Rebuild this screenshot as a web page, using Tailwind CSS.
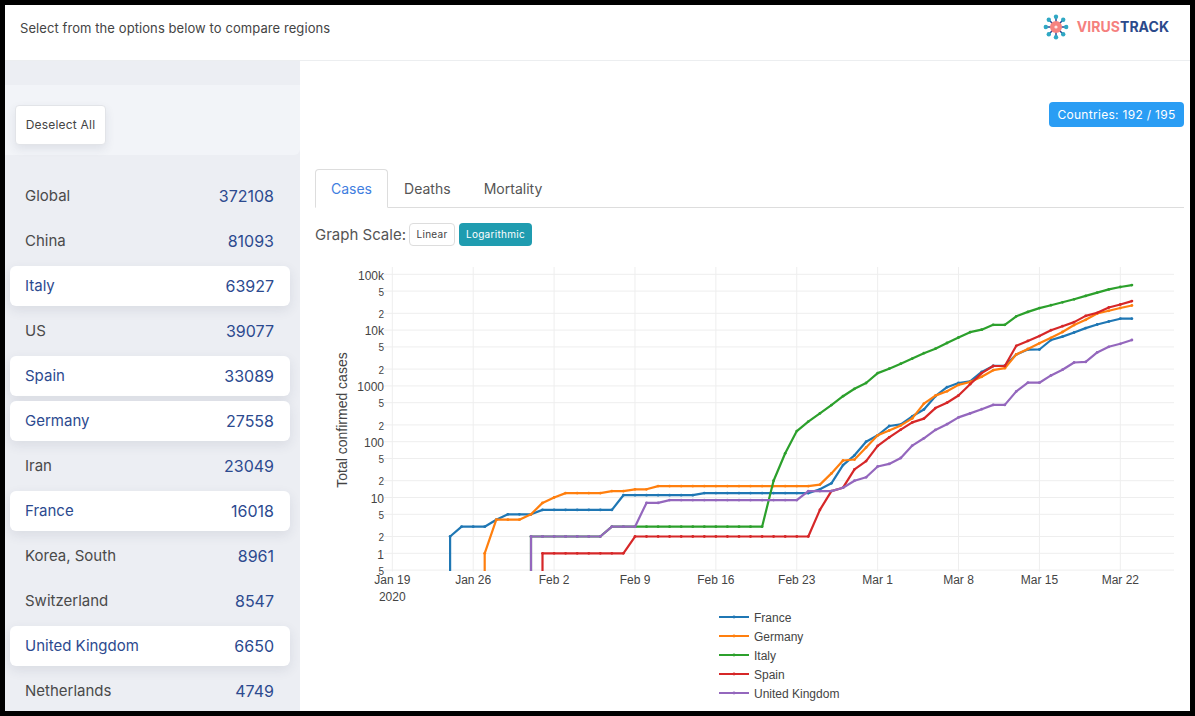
<!DOCTYPE html>
<html lang="en">
<head>
    <meta charset="UTF-8">
    <meta name="viewport" content="width=device-width, initial-scale=1.0">
    <title>VirusTrack</title>
    <script src="https://cdn.jsdelivr.net/npm/@tailwindcss/browser@4"></script>
</head>
<body class="bg-black">
    <div class="w-[1195px] h-[716px] bg-black p-[5px] font-['Inter',sans-serif] overflow-hidden">
        <div class="w-[1185px] h-[706px] bg-white overflow-hidden flex flex-col">
            <!-- header -->
            <header class="h-[56px] shrink-0 border-b border-[#eceef0] flex items-center justify-between pl-[15px] pr-[21px]">
                <p class="text-[13px] tracking-[0.08px] text-[#444] -mt-[8px]">Select from the options below to compare regions</p>
                <div class="flex items-center gap-[8px] -mt-[11px]">
                    <svg width="26" height="26" viewBox="-13 -13 26 26">
                        <g stroke="#1f3f8f" stroke-width="1.4">
                            <line x1="0" y1="-10" x2="0" y2="10"/>
                            <line x1="-10" y1="0" x2="10" y2="0"/>
                            <line x1="-7" y1="-7" x2="7" y2="7"/>
                            <line x1="7" y1="-7" x2="-7" y2="7"/>
                        </g>
                        <circle r="6" fill="#f5837f"/>
                        <circle r="1.6" cx="0" fill="#fde8e6"/>
                        <g fill="#2fa8c4">
                            <circle cx="0" cy="-10.2" r="2.2"/>
                            <circle cx="0" cy="10.2" r="2.2"/>
                            <circle cx="-10.2" cy="0" r="2.2"/>
                            <circle cx="10.2" cy="0" r="2.2"/>
                            <circle cx="-7.2" cy="-7.2" r="2.2"/>
                            <circle cx="7.2" cy="-7.2" r="2.2"/>
                            <circle cx="-7.2" cy="7.2" r="2.2"/>
                            <circle cx="7.2" cy="7.2" r="2.2"/>
                        </g>
                    </svg>
                    <span class="text-[14px] leading-[20px] font-bold tracking-[0.03px]"><span class="text-[#f5807e]">VIRUS</span><span class="text-[#2b4a8b]">TRACK</span></span>
                </div>
            </header>

            <div class="flex flex-1 min-h-0">
                <!-- sidebar -->
                <aside class="w-[295px] shrink-0 bg-[#eceef3] pt-[24px] overflow-hidden">
                    <div class="h-[70px] bg-[#f2f4f8] rounded-br-md pl-[10px] pt-[20px]">
                        <button class="w-[91px] h-[40px] bg-white border border-[#e2e4e8] rounded-[4px] shadow-[0_4px_10px_rgba(50,60,90,0.1)] text-[12px] tracking-[0.2px] text-[#444]">Deselect All</button>
                    </div>
                    <ul class="pt-[21px] pl-[5px] pr-[10px] flex flex-col gap-[5px] text-[15px]">
                        <li class="h-[40px] pl-[15px] pr-[16px] flex items-center justify-between text-[#4a4a4a]"><span>Global</span><span class="text-[16px] leading-[22px] -mt-[1px] text-[#2c4a8f]">372108</span></li>
                        <li class="h-[40px] pl-[15px] pr-[16px] flex items-center justify-between text-[#4a4a4a]"><span>China</span><span class="text-[16px] leading-[22px] -mt-[1px] text-[#2c4a8f]">81093</span></li>
                        <li class="h-[40px] pl-[15px] pr-[16px] flex items-center justify-between bg-white rounded-md shadow-[0_4px_12px_rgba(50,60,90,0.1)] text-[#2c4a8f]"><span>Italy</span><span class="text-[16px] leading-[22px] -mt-[1px]">63927</span></li>
                        <li class="h-[40px] pl-[15px] pr-[16px] flex items-center justify-between text-[#4a4a4a]"><span>US</span><span class="text-[16px] leading-[22px] -mt-[1px] text-[#2c4a8f]">39077</span></li>
                        <li class="h-[40px] pl-[15px] pr-[16px] flex items-center justify-between bg-white rounded-md shadow-[0_4px_12px_rgba(50,60,90,0.1)] text-[#2c4a8f]"><span>Spain</span><span class="text-[16px] leading-[22px] -mt-[1px]">33089</span></li>
                        <li class="h-[40px] pl-[15px] pr-[16px] flex items-center justify-between bg-white rounded-md shadow-[0_4px_12px_rgba(50,60,90,0.1)] text-[#2c4a8f]"><span>Germany</span><span class="text-[16px] leading-[22px] -mt-[1px]">27558</span></li>
                        <li class="h-[40px] pl-[15px] pr-[16px] flex items-center justify-between text-[#4a4a4a]"><span>Iran</span><span class="text-[16px] leading-[22px] -mt-[1px] text-[#2c4a8f]">23049</span></li>
                        <li class="h-[40px] pl-[15px] pr-[16px] flex items-center justify-between bg-white rounded-md shadow-[0_4px_12px_rgba(50,60,90,0.1)] text-[#2c4a8f]"><span>France</span><span class="text-[16px] leading-[22px] -mt-[1px]">16018</span></li>
                        <li class="h-[40px] pl-[15px] pr-[16px] flex items-center justify-between text-[#4a4a4a]"><span>Korea, South</span><span class="text-[16px] leading-[22px] -mt-[1px] text-[#2c4a8f]">8961</span></li>
                        <li class="h-[40px] pl-[15px] pr-[16px] flex items-center justify-between text-[#4a4a4a]"><span>Switzerland</span><span class="text-[16px] leading-[22px] -mt-[1px] text-[#2c4a8f]">8547</span></li>
                        <li class="h-[40px] pl-[15px] pr-[16px] flex items-center justify-between bg-white rounded-md shadow-[0_4px_12px_rgba(50,60,90,0.1)] text-[#2c4a8f]"><span>United Kingdom</span><span class="text-[16px] leading-[22px] -mt-[1px]">6650</span></li>
                        <li class="h-[40px] pl-[15px] pr-[16px] flex items-center justify-between text-[#4a4a4a]"><span>Netherlands</span><span class="text-[16px] leading-[22px] -mt-[1px] text-[#2c4a8f]">4749</span></li>
                    </ul>
                </aside>

                <!-- main -->
                <main class="flex-1 min-w-0 pl-[15px] pr-[6px] pt-[41px]">
                    <div class="flex justify-end">
                        <button class="w-[135px] h-[25px] bg-[#2a9df4] rounded-[4px] text-white text-[12px] tracking-[0.3px]">Countries: 192 / 195</button>
                    </div>
                    <div class="mt-[42px] h-[39px] border-b border-[#ddd] flex text-[14px] text-[#555]">
                        <div class="w-[73px] h-[39px] border border-[#ddd] border-b-white rounded-t-[4px] bg-white flex items-center justify-center text-[#3f7ee0]">Cases</div>
                        <div class="ml-[16px] flex items-center tracking-[0.03px]">Deaths</div>
                        <div class="ml-[33px] flex items-center">Mortality</div>
                    </div>
                    <div class="mt-[15px] h-[23px] flex items-center">
                        <span class="text-[15px] leading-[25px] text-[#555] mr-[3px]">Graph Scale:</span>
                        <button class="w-[46px] h-[23px] border border-[#ddd] rounded-[4px] bg-white text-[10px] tracking-[0.3px] text-[#444]">Linear</button>
                        <button class="w-[73px] h-[23px] ml-[4px] rounded-[4px] bg-[#1f9cb0] text-[10px] tracking-[0.3px] text-white">Logarithmic</button>
                    </div>
                    <svg id="chart" class="block mt-[12px]" width="869" height="453" viewBox="315 258 869 453" font-family="'Liberation Sans', sans-serif" fill="#444"></svg>
                </main>
            </div>
        </div>
    </div>

    <script>
        const rep = (v, n) => Array(n).fill(v);

        const series = [
            { name: "France", color: "#1f77b4", start: 5, values: [2, 3, 3, 3, 4, 5, 5, 5, ...rep(6, 7), ...rep(11, 7), ...rep(12, 10), 14, 18, 38, 57, 100,
                130, 191, 204, 285, 377, 653, 949, 1126, 1209, 1784, 2281, 2281, 3661, 4469, 4499, 6633, 7652, 9043, 10871, 12612, 14282, 16018, 16018] },
            { name: "Germany", color: "#ff7f0e", start: 8, values: [1, 4, 4, 4, 5, 8, 10, ...rep(12, 4), 13, 13, 14, 14, ...rep(16, 14), 17, 27, 46, 48, 79,
                130, 159, 196, 262, 482, 670, 799, 1040, 1176, 1457, 1908, 2078, 3675, 4585, 5795, 7272, 9257, 12327, 15320, 19848, 22213, 24873, 27558] },
            { name: "Italy", color: "#2ca02c", start: 12, values: [...rep(2, 7), ...rep(3, 14), 20, 62, 155, 229, 322, 453, 655, 888, 1128,
                1694, 2036, 2502, 3089, 3858, 4636, 5883, 7375, 9172, 10149, 12462, 12462, 17660, 21157, 24747, 27980, 31506, 35713, 41035, 47021, 53578, 59138, 63927] },
            { name: "Spain", color: "#d62728", start: 13, values: [...rep(1, 8), ...rep(2, 16), 6, 13, 15, 32, 45,
                84, 120, 165, 222, 259, 400, 500, 673, 1073, 1695, 2277, 2277, 5232, 6391, 7798, 9942, 11748, 13910, 17963, 20410, 25374, 28768, 33089] },
            { name: "United Kingdom", color: "#9467bd", start: 12, values: [...rep(2, 7), 3, 3, 3, 8, 8, ...rep(9, 12), 13, 13, 13, 15, 20, 23,
                36, 40, 51, 85, 115, 163, 206, 273, 321, 382, 456, 456, 798, 1140, 1140, 1543, 1950, 2626, 2689, 3983, 5018, 5683, 6650] }
        ];

        // page coordinates, the svg viewBox lines up with them
        const xOf = d => 392.3 + d * 11.556;
        const yOf = v => 553.3 - 55.8 * Math.log10(v);
        const bottom = 570.5;

        let out = `<defs><clipPath id="plot"><rect x="385" y="267" width="790" height="304"/></clipPath></defs>`;

        // gridlines
        const yTicks = [
            [100000, "100k", 12], [50000, "5", 10], [20000, "2", 10],
            [10000, "10k", 12], [5000, "5", 10], [2000, "2", 10],
            [1000, "1000", 12], [500, "5", 10], [200, "2", 10],
            [100, "100", 12], [50, "5", 10], [20, "2", 10],
            [10, "10", 12], [5, "5", 10], [2, "2", 10],
            [1, "1", 12], [0.5, "5", 10]
        ];
        yTicks.forEach(([v, label, size]) => {
            const y = yOf(v);
            out += `<line x1="384" x2="1174" y1="${y}" y2="${y}" stroke="#eee"/>`;
            out += `<text x="384" y="${y + size * 0.36 + 1}" text-anchor="end" font-size="${size}">${label}</text>`;
        });

        const xTicks = ["Jan 19", "Jan 26", "Feb 2", "Feb 9", "Feb 16", "Feb 23", "Mar 1", "Mar 8", "Mar 15", "Mar 22"];
        xTicks.forEach((label, i) => {
            const x = xOf(i * 7);
            out += `<line x1="${x}" x2="${x}" y1="267" y2="${bottom + 1}" stroke="#eee"/>`;
            out += `<text x="${x}" y="584" text-anchor="middle" font-size="12">${label}</text>`;
        });
        out += `<text x="${xOf(0)}" y="601" text-anchor="middle" font-size="12">2020</text>`;
        out += `<text transform="translate(347 420) rotate(-90)" text-anchor="middle" font-size="14">Total confirmed cases</text>`;

        // traces
        out += `<g clip-path="url(#plot)">`;
        series.forEach(s => {
            const pts = s.values.map((v, i) => [xOf(s.start + i), yOf(v)]);
            const line = [[pts[0][0], bottom + 4], ...pts].map(p => p[0].toFixed(1) + "," + p[1].toFixed(1)).join(" ");
            out += `<polyline points="${line}" fill="none" stroke="${s.color}" stroke-width="2.2" stroke-linejoin="round"/>`;
            pts.forEach(p => {
                out += `<circle cx="${p[0].toFixed(1)}" cy="${p[1].toFixed(1)}" r="1.4" fill="${s.color}"/>`;
            });
        });
        out += `</g>`;

        // legend
        series.forEach((s, i) => {
            const y = 617 + i * 19;
            out += `<line x1="719" x2="749" y1="${y}" y2="${y}" stroke="${s.color}" stroke-width="2"/>`;
            out += `<circle cx="734" cy="${y}" r="1.4" fill="${s.color}"/>`;
            out += `<text x="754" y="${y + 5}" font-size="12">${s.name}</text>`;
        });

        document.getElementById("chart").innerHTML = out;
    </script>
</body>
</html>
